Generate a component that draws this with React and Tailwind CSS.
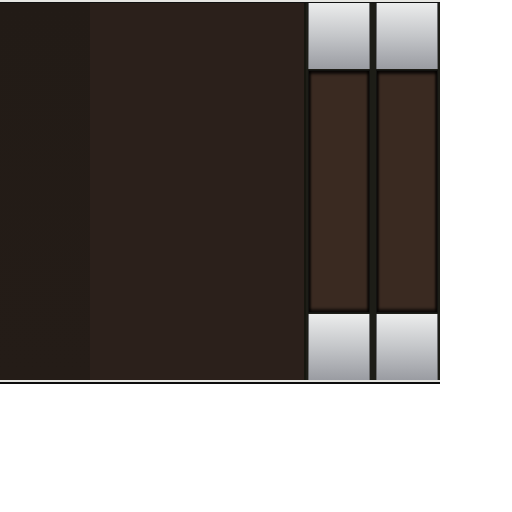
import React from 'react';

const Button = () => (
  <div className="h-[66px] shrink-0 border-x border-[#6b6c6e] bg-gradient-to-b from-[#eceded] via-[#c4c6c9] to-[#9a9ca2]" />
);

const ScrollBar = () => (
  <div className="w-[62px] flex flex-col bg-[#1d1d17]">
    <Button />
    <div className="flex-1 my-[1px] bg-[#3a2a21] border border-[#121210] shadow-[inset_0_3px_3px_rgba(0,0,0,0.75),inset_0_-3px_3px_rgba(0,0,0,0.65),inset_2px_0_2px_rgba(0,0,0,0.5),inset_-2px_0_2px_rgba(0,0,0,0.5)]" />
    <Button />
  </div>
);

const App = () => {
  return (
    <div className="w-[512px] h-[512px] bg-white">
      <div className="w-[440px]">
        <div className="h-[2px] bg-[#e6e6e2]" />
        <div className="h-[1px] bg-[#111111]" />
        <div className="flex h-[377px]">
          <div className="w-[90px] bg-gradient-to-b from-[#221b16] to-[#241c17]" />
          <div className="w-[214px] bg-[#2b201b]" />
          <div className="w-[2px] bg-[#16160f]" />
          <div className="flex flex-1 gap-[6px] bg-[#1d1d17] px-[2px]">
            <ScrollBar />
            <ScrollBar />
          </div>
        </div>
        <div className="h-[2px] bg-[#e2e2de]" />
        <div className="h-[2px] bg-[#0c0c0c]" />
      </div>
    </div>
  );
};

export default App;
